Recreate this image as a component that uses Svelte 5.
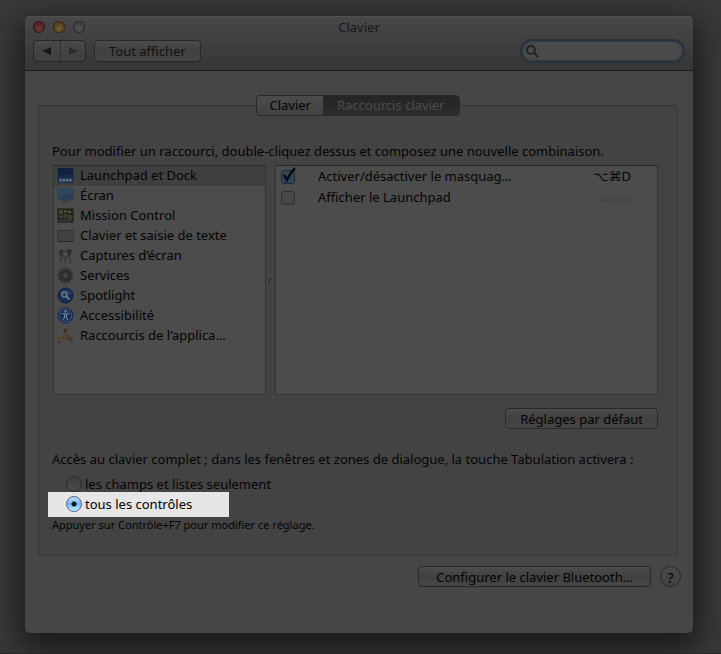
<script lang="ts">
  type Category = { icon: string; label: string };
  type Shortcut = { label: string; keys: string; enabled: boolean };

  const categories: Category[] = [
    { icon: 'launchpad', label: 'Launchpad et Dock' },
    { icon: 'screen', label: 'Écran' },
    { icon: 'mission', label: 'Mission Control' },
    { icon: 'keyboard', label: 'Clavier et saisie de texte' },
    { icon: 'capture', label: 'Captures d’écran' },
    { icon: 'services', label: 'Services' },
    { icon: 'spotlight', label: 'Spotlight' },
    { icon: 'access', label: 'Accessibilité' },
    { icon: 'apps', label: 'Raccourcis de l’applica…' }
  ];

  let shortcuts = $state<Shortcut[]>([
    { label: 'Activer/désactiver le masquag…', keys: '⌥⌘D', enabled: true },
    { label: 'Afficher le Launchpad', keys: '', enabled: false }
  ]);

  let tab = $state('shortcuts');
  let selected = $state('launchpad');
  let access = $state('all');
  let query = $state('');

  const teeth = [0, 30, 60, 90, 120, 150, 180, 210, 240, 270, 300, 330];
</script>

{#snippet icon(name: string)}
  <svg class="icon" viewBox="0 0 17 17" aria-hidden="true">
    {#if name === 'launchpad'}
      <rect x="0.5" y="1" width="16" height="15" rx="1" fill="#152b4b" />
      <path d="M1 1h15v7H1z" fill="#10213b" />
      <path d="M2 12h13v3H2z" fill="#2d425f" />
      <path d="M2.5 11.5h2v3h-2zM5.8 11.5h2v3h-2zM9.1 11.5h2v3h-2zM12.4 11.5h2v3h-2z" fill="#65717f" />
    {:else if name === 'screen'}
      <rect x="0.5" y="1.5" width="16" height="11.5" rx="0.5" fill="#293c55" stroke="#3b434d" />
      <path d="M1 2h15v4L1 11z" fill="#30455f" />
      <path d="M6.5 13.5h4l1 2h-6z" fill="#383838" />
    {:else if name === 'mission'}
      <rect x="0.5" y="1.5" width="16" height="14" rx="1" fill="#24251e" stroke="#303030" />
      <path d="M2 3h4v4H2z" fill="#3b4534" />
      <path d="M11 8h4v5h-4z" fill="#38432f" />
      <path d="M7 3.5h3v2H7zM11 4h3v2h-3z" fill="#5e542e" />
      <path d="M2 8.5h4v2H2z" fill="#4d422b" />
      <path d="M7 7h3v5H7z" fill="#31412f" />
      <path d="M2 13h12v1.5H2z" fill="#343a3c" />
    {:else if name === 'keyboard'}
      <rect x="0.5" y="3.5" width="16" height="11" rx="1" fill="#424242" stroke="#343434" />
      <path d="M2 5.5h13M2 7.5h13M2 9.5h13M2 11.5h13" stroke="#3e3e3e" stroke-dasharray="1 1" />
      <path d="M1 14.5h15" stroke="#272727" />
    {:else if name === 'capture'}
      <path d="M1.5 4l3-2 3 1.500-1 4-3 1.500-2-1z" fill="#3a3a3a" />
      <path d="M8 4l3-2 4 1-1 5-2 1-3-1z" fill="#343434" />
      <path d="M4 3l2 1-1 3-2 1zM11 4l3-1-1 4-2 1z" fill="#292929" />
      <path d="M5 8l-2 8M6 8l2 4M11 8l-4 8M12 8l2 8" stroke="#383838" stroke-width="1.500" fill="none" />
      <path d="M6 5l3 3 2-3" stroke="#626262" fill="none" />
    {:else if name === 'services'}
      {#each teeth as angle}
        <rect x="7.5" y="0.5" width="2" height="4" fill="#2d2d2d" transform="rotate({angle} 8.5 8.5)" />
      {/each}
      <circle cx="8.5" cy="8.5" r="4.5" fill="#3d3d3d" stroke="#2d2d2d" stroke-width="3" />
      <circle cx="8.5" cy="8.5" r="2" fill="#4c4c4c" stroke="#3a3a3a" />
    {:else if name === 'spotlight'}
      <circle cx="8.5" cy="8.5" r="7.5" fill="#142c56" stroke="#10213f" />
      <path d="M2 7a7 7 0 0 1 13 0q-6 3-13 0z" fill="#223b63" />
      <circle cx="7.5" cy="7.5" r="2.5" fill="none" stroke="#697789" stroke-width="1.5" />
      <path d="M9.5 9.5l3 3" stroke="#697789" stroke-width="2" />
    {:else if name === 'access'}
      <circle cx="8.5" cy="8.5" r="7.5" fill="#142e59" stroke="#172947" />
      <circle cx="8.5" cy="8.5" r="6.200" fill="none" stroke="#465a75" />
      <circle cx="8.5" cy="4.5" r="1.2" fill="#7b8797" />
      <path d="M4.5 6.5l3 .7v2L6.5 13M12.5 6.5l-3 .7v2l1 3.8M7.5 7h2v3h-2z" fill="none" stroke="#7b8797" />
    {:else}
      <path d="M0.500 10.500h16v1.500h-16z" fill="#4f3a26" />
      <path d="M2.500 14.500L8.500 3" stroke="#5f4a28" stroke-width="2.2" />
      <path d="M1.300 16l.3-2.500 2 1z" fill="#292622" />
      <path d="M7 3.500L13 14" stroke="#573a20" stroke-width="2.2" />
      <path d="M12 13l2.200-1L16 16z" fill="#3c3732" />
      <path d="M6 3.500L8 1.500l2 1-1 3z" fill="#34312e" />
    {/if}
  </svg>
{/snippet}

<main class="desktop">
  <div class="window">
    <header>
      <div class="titlebar">
        <div class="lights">
          <button type="button" class="light close" aria-label="Fermer"></button>
          <button type="button" class="light minimize" aria-label="Réduire"></button>
          <button type="button" class="light zoom" aria-label="Agrandir"></button>
        </div>
        <h1>Clavier</h1>
      </div>
      <div class="toolbar">
        <div class="history">
          <button type="button" aria-label="Précédent">
            <svg viewBox="0 0 10 8" width="10" height="8"><path d="M0 4l9-4v8z" fill="#181818" /></svg>
          </button>
          <button type="button" aria-label="Suivant">
            <svg viewBox="0 0 10 8" width="10" height="8"><path d="M10 4L1 0v8z" fill="#2b2b2b" /></svg>
          </button>
        </div>
        <button type="button" class="push show-all">Tout afficher</button>
        <label class="search">
          <svg viewBox="0 0 13 13" width="13" height="13" aria-hidden="true">
            <circle cx="5" cy="5" r="4" fill="none" stroke="#232323" stroke-width="2" />
            <path d="M8 8l4 4" stroke="#232323" stroke-width="2" />
          </svg>
          <input type="text" aria-label="Rechercher" bind:value={query} />
        </label>
      </div>
    </header>

    <div class="content">
      <div class="tabs" role="tablist">
        <button type="button" role="tab" aria-selected={tab === 'keyboard'} class:active={tab === 'keyboard'} onclick={() => (tab = 'keyboard')}>Clavier</button>
        <button type="button" role="tab" aria-selected={tab === 'shortcuts'} class:active={tab === 'shortcuts'} onclick={() => (tab = 'shortcuts')}>Raccourcis clavier</button>
      </div>

      <section class="panel">
        <p>Pour modifier un raccourci, double-cliquez dessus et composez une nouvelle combinaison.</p>

        <div class="lists">
          <ul class="well">
            {#each categories as category}
              <li>
                <button type="button" class:selected={selected === category.icon} onclick={() => (selected = category.icon)}>
                  {@render icon(category.icon)}
                  <span>{category.label}</span>
                </button>
              </li>
            {/each}
          </ul>
          <div class="splitter">
            <svg viewBox="0 0 5 5" width="5" height="5" aria-hidden="true"><path d="M1 4V2l3-1" fill="none" stroke="#292929" /></svg>
          </div>
          <div class="well">
            <table>
              <tbody>
                {#each shortcuts as shortcut, i}
                  <tr>
                    <td class="check">
                      <span class="box">
                        <input type="checkbox" id="shortcut-{i}" bind:checked={shortcut.enabled} />
                        {#if shortcut.enabled}
                          <svg viewBox="0 0 16 17" width="16" height="17" aria-hidden="true">
                            <path d="M3 8l3 5q3-7 8-12" fill="none" stroke="#050b14" stroke-width="2.5" />
                          </svg>
                        {/if}
                      </span>
                    </td>
                    <td><label for="shortcut-{i}">{shortcut.label}</label></td>
                    <td class="keys" class:none={!shortcut.keys}>{shortcut.keys || 'aucun'}</td>
                  </tr>
                {/each}
              </tbody>
            </table>
          </div>
        </div>

        <div class="defaults">
          <button type="button" class="push">Réglages par défaut</button>
        </div>

        <p id="access-label">Accès au clavier complet ; dans les fenêtres et zones de dialogue, la touche Tabulation activera :</p>
        <div class="radios" role="radiogroup" aria-labelledby="access-label">
          <label>
            <input type="radio" name="access" value="fields" bind:group={access} />
            les champs et listes seulement
          </label>
          <label class="spot">
            <input type="radio" name="access" value="all" bind:group={access} />
            tous les contrôles
          </label>
        </div>
        <p class="note">Appuyer sur Contrôle+F7 pour modifier ce réglage.</p>
      </section>

      <footer>
        <button type="button" class="push bluetooth">Configurer le clavier Bluetooth…</button>
        <button type="button" class="help" aria-label="Aide">?</button>
      </footer>
    </div>
  </div>
</main>

<style>
  :global(body) {
    background: #393939;
  }
  .desktop {
    box-sizing: border-box;
    min-height: 100vh;
    padding: 16px 28px 20px 25px;
    overflow: hidden;
    border-bottom: 1px solid #2d2525;
    background: #393939;
    color: #030303;
    font: 13px/20px 'Noto Sans', 'DejaVu Sans', sans-serif;
  }
  .window {
    border-radius: 5px;
    background: #464646;
    box-shadow: 0 0 1px #151515, 0 12px 32px 6px rgba(0, 0, 0, 0.55);
  }
  button,
  input {
    box-sizing: border-box;
    margin: 0;
    font: inherit;
    color: inherit;
  }
  header {
    box-sizing: border-box;
    height: 55px;
    padding: 0 8px;
    border-bottom: 1px solid #1c1c1c;
    border-radius: 5px 5px 0 0;
    background: linear-gradient(#484848, #363636);
    box-shadow: inset 0 1px #505050;
  }
  .titlebar {
    display: grid;
    grid-template-columns: 1fr auto 1fr;
    align-items: center;
    height: 22px;
  }
  h1 {
    margin: 0;
    font-size: 13px;
    font-weight: 400;
    color: #171717;
  }
  .lights {
    display: flex;
    gap: 8px;
  }
  .light {
    width: 12px;
    height: 12px;
    padding: 0;
    border: 1px solid #282828;
    border-radius: 50%;
    background: radial-gradient(circle at 50% 70%, #545454, #363636);
  }
  .close {
    border-color: #2d1212;
    background: radial-gradient(circle at 50% 70%, #6a3c39, #4b1515);
  }
  .minimize {
    border-color: #38250f;
    background: radial-gradient(circle at 50% 70%, #6c5936, #503716);
  }
  .toolbar {
    display: flex;
    align-items: center;
    margin-top: 2px;
    gap: 8px;
  }
  .history {
    display: flex;
    border: 1px solid #272727;
    border-radius: 4px;
    background: linear-gradient(#484848, #3f3f3f);
  }
  .history button {
    display: flex;
    align-items: center;
    justify-content: center;
    width: 26px;
    height: 20px;
    padding: 0;
    border: 0;
    background: none;
  }
  .history button + button {
    width: 25px;
    border-left: 1px solid #303030;
  }
  .push {
    height: 21px;
    padding: 0 14px;
    border: 1px solid #292929;
    border-radius: 4px;
    background: linear-gradient(#4c4c4c, #414141 50%, #464646);
    line-height: 18px;
    white-space: nowrap;
  }
  .show-all {
    height: 22px;
    color: #111;
  }
  .bluetooth {
    padding: 0 17px;
  }
  .search {
    display: flex;
    align-items: center;
    box-sizing: border-box;
    width: 163px;
    height: 22px;
    margin-left: auto;
    margin-right: 1px;
    padding: 0 4px;
    border: 1px solid #27323f;
    border-radius: 11px;
    background: #4b4b4d;
    box-shadow: 0 0 0 1px #27323f, inset 0 0 2px 1px #343d48;
  }
  .search svg {
    flex: none;
  }
  .search input {
    flex: 1;
    min-width: 0;
    border: 0;
    outline: 0;
    background: none;
  }
  .content {
    padding: 24px 15px 46px 13px;
  }
  .tabs {
    position: relative;
    display: flex;
    justify-content: center;
    width: fit-content;
    margin: 0 auto -11px;
    border: 1px solid #292929;
    border-radius: 4px;
    background: linear-gradient(#4b4b4b, #434343);
    overflow: hidden;
  }
  .tabs button {
    height: 19px;
    padding: 0 12px 1px;
    border: 0;
    background: none;
    line-height: 18px;
  }
  .tabs .active {
    padding: 0 14px 1px;
    background: linear-gradient(#242424, #2d2d2d);
    color: #4d4d4d;
  }
  .panel {
    padding: 35px 19px 20px 13px;
    border: 1px solid #3b3b3b;
    border-top-color: #343434;
    border-radius: 3px;
    background: #434343;
  }
  p {
    margin: 0;
    white-space: nowrap;
  }
  .lists {
    display: grid;
    grid-template-columns: 213px 9px 1fr;
    height: 230px;
    margin: 4px 0 0 1px;
  }
  .well {
    box-sizing: border-box;
    min-width: 0;
    margin: 0;
    padding: 0;
    border: 1px solid #353535;
    border-top-color: #282828;
    background: #4c4c4c;
    list-style: none;
  }
  .well li button {
    display: flex;
    align-items: center;
    gap: 6px;
    width: 100%;
    height: 20px;
    padding: 0 3px 2px;
    border: 0;
    background: none;
    text-align: left;
    white-space: nowrap;
  }
  .well li .selected {
    background: #404040;
  }
  .icon {
    flex: none;
    width: 17px;
    height: 17px;
  }
  .splitter {
    display: flex;
    align-items: center;
    justify-content: center;
  }
  table {
    width: 100%;
    border-collapse: collapse;
  }
  td {
    height: 21px;
    padding: 0;
    line-height: 21px;
    white-space: nowrap;
  }
  .check {
    width: 37px;
    padding-left: 5px;
  }
  .box {
    position: relative;
    display: flex;
    align-items: center;
  }
  .box input {
    appearance: none;
    width: 14px;
    height: 14px;
    border: 1px solid #303030;
    border-radius: 3px;
    background: linear-gradient(#4b4b4b, #444);
  }
  .box input:checked {
    border-color: #1d2a3b;
    background: linear-gradient(#3b4653, #30465b);
  }
  .box svg {
    position: absolute;
    left: 0;
    bottom: 0;
    pointer-events: none;
  }
  .keys {
    padding-right: 26px;
    text-align: right;
  }
  .none {
    color: #414141;
    font-size: 11px;
  }
  .defaults {
    display: flex;
    justify-content: flex-end;
    margin: 13px 0 20px;
  }
  .radios {
    margin-top: 6px;
  }
  .radios label {
    display: flex;
    align-items: center;
    gap: 3px;
    width: fit-content;
    height: 17px;
    padding-left: 14px;
  }
  .radios .spot {
    box-sizing: border-box;
    width: 181px;
    height: 25px;
    margin-left: -4px;
    padding: 0 0 1px 18px;
    background: #e6e6e6;
    color: #000;
  }
  .radios input {
    appearance: none;
    width: 16px;
    height: 16px;
    border: 1px solid #2a2a2a;
    border-radius: 50%;
    background: linear-gradient(#3d3d3d, #4b4b4b);
  }
  .radios input:checked {
    border-color: #56618f;
    background: radial-gradient(circle, #06162b 2px, transparent 3px), linear-gradient(#c6dcf5, #74b5f0 50%, #c1f0ff);
  }
  .note {
    margin-top: -2px;
    font-size: 11px;
  }
  footer {
    display: flex;
    align-items: center;
    justify-content: flex-end;
    gap: 9px;
    margin: 10px -3px 0 0;
  }
  .help {
    width: 21px;
    height: 21px;
    padding: 0;
    border: 1px solid #282828;
    border-radius: 50%;
    background: linear-gradient(#4b4b4b, #434343);
    font-size: 15px;
    line-height: 18px;
  }
</style>
